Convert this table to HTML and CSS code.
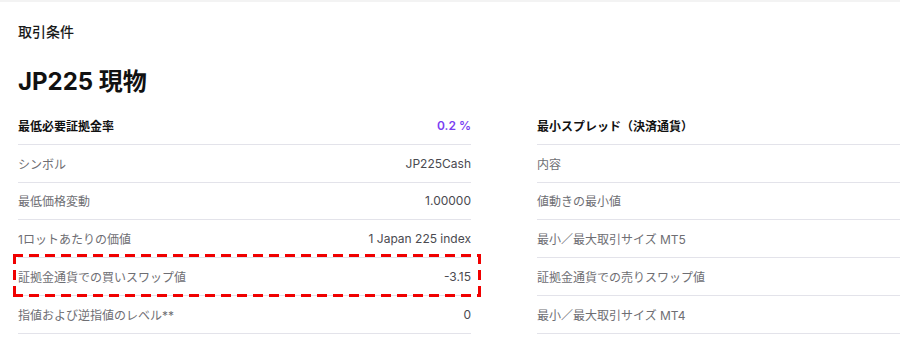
FILE: index.html
```html
<!DOCTYPE html>
<html lang="ja">
<head>
<meta charset="utf-8">
<link rel="stylesheet" href="styles.css">
</head>
<body>
<div class="page">
  <div class="section-label">取引条件</div>
  <h1 class="title">JP225 現物</h1>
  <div class="columns">
    <div class="col">
      <div class="row head"><span class="label">最低必要証拠金率</span><span class="value accent">0.2 %</span></div>
      <div class="row"><span class="label">シンボル</span><span class="value">JP225Cash</span></div>
      <div class="row"><span class="label">最低価格変動</span><span class="value">1.00000</span></div>
      <div class="row"><span class="label">1ロットあたりの価値</span><span class="value">1 Japan 225 index</span></div>
      <div class="row highlight"><span class="label">証拠金通貨での買いスワップ値</span><span class="value">-3.15</span></div>
      <div class="row"><span class="label">指値および逆指値のレベル**</span><span class="value">0</span></div>
    </div>
    <div class="col">
      <div class="row head"><span class="label">最小スプレッド（決済通貨）</span></div>
      <div class="row"><span class="label">内容</span></div>
      <div class="row"><span class="label">値動きの最小値</span></div>
      <div class="row"><span class="label">最小／最大取引サイズ MT5</span></div>
      <div class="row"><span class="label">証拠金通貨での売りスワップ値</span></div>
      <div class="row"><span class="label">最小／最大取引サイズ MT4</span></div>
    </div>
  </div>
</div>
</body>
</html>
```

FILE: styles.css
```css
html, body {
  margin: 0;
  padding: 0;
  background: #fff;
  overflow: hidden;
}
body {
  font-family: Inter, "Noto Sans CJK JP", sans-serif;
  color: #1a1a1a;
  border-top: 2px solid #f3f3f3;
}
.page {
  padding: 20px 0 0 18px;
  width: 882px;
}
.section-label {
  font-size: 14px;
  line-height: 20px;
  font-weight: 500;
  color: #1a1a1a;
}
.title {
  margin: 25px 0 0 0;
  font-size: 24px;
  line-height: 30px;
  font-weight: 700;
  color: #111;
}
.columns {
  display: grid;
  grid-template-columns: 453px 363px;
  column-gap: 66px;
  margin-top: 10px;
}
.row {
  display: flex;
  justify-content: space-between;
  align-items: center;
  height: 36.8px;
  border-bottom: 1px solid #e3e3ea;
  font-size: 12px;
}
.label {
  color: #6e6e73;
}
.value {
  color: #4a4a50;
}
.head .label {
  color: #111;
  font-weight: 600;
}
.accent {
  color: #7b3ff2;
  font-weight: 600;
}
.highlight {
  position: relative;
}
.highlight::after {
  content: "";
  position: absolute;
  left: -5px;
  right: -10px;
  top: -4px;
  bottom: -2px;
  pointer-events: none;
  background:
    repeating-linear-gradient(90deg, #f00000 0 10px, transparent 10px 16px) left top / 100% 3px no-repeat,
    repeating-linear-gradient(90deg, #f00000 0 10px, transparent 10px 16px) left bottom / 100% 3px no-repeat,
    repeating-linear-gradient(180deg, #f00000 0 10px, transparent 10px 16px) left top / 3px 100% no-repeat,
    repeating-linear-gradient(180deg, #f00000 0 10px, transparent 10px 16px) right top / 3px 100% no-repeat;
}
```
